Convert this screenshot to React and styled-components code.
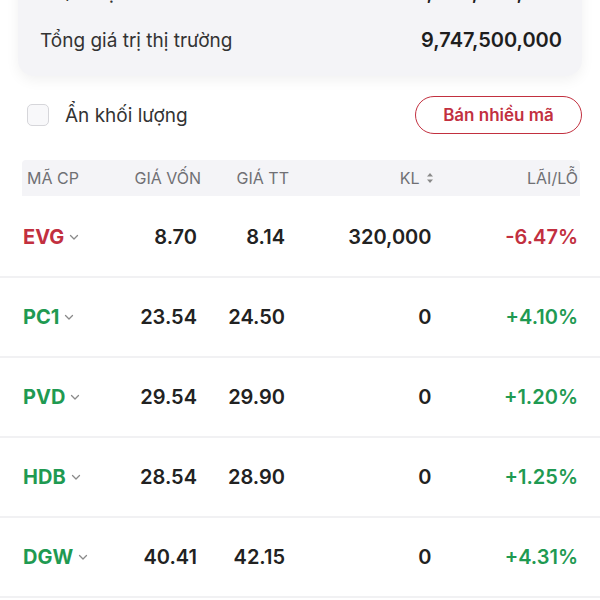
import styled, { createGlobalStyle } from "styled-components";

const GlobalStyle = createGlobalStyle`
  body {
    margin: 0;
    background: #fff;
    font-family: Inter, "Noto Sans", sans-serif;
    color: #222;
  }
`;

const RED = '#c2303f';
const GREEN = '#1f9a52';

const holdings = [
  { code: 'EVG', cost: '8.70', price: '8.14', vol: '320,000', pnl: '-6.47%', up: false },
  { code: 'PC1', cost: '23.54', price: '24.50', vol: '0', pnl: '+4.10%', up: true },
  { code: 'PVD', cost: '29.54', price: '29.90', vol: '0', pnl: '+1.20%', up: true },
  { code: 'HDB', cost: '28.54', price: '28.90', vol: '0', pnl: '+1.25%', up: true },
  { code: 'DGW', cost: '40.41', price: '42.15', vol: '0', pnl: '+4.31%', up: true },
];

function Chevron () {
  return (
    <svg width="10" height="7" viewBox="0 0 10 7">
      <path d="M1.5 1.5 L5 5 L8.5 1.5" fill="none" stroke="#8a8a8a" strokeWidth="1.3" strokeLinecap="round" strokeLinejoin="round" />
    </svg>
  );
}

function SortIcon () {
  return (
    <svg width="8" height="12" viewBox="0 0 8 12">
      <path d="M4 1 L7 4.5 H1 Z M4 11 L7 7.5 H1 Z" fill="#8a8a8a" />
    </svg>
  );
}

function InfoDot () {
  return (
    <svg width="14" height="14" viewBox="0 0 14 14">
      <circle cx="7" cy="7" r="7" fill="#9a9a9e" />
      <rect x="6.2" y="6" width="1.6" height="5" fill="#fff" />
      <circle cx="7" cy="3.9" r="1" fill="#fff" />
    </svg>
  );
}

export default function App () {
  return (
    <Page>
      <GlobalStyle />
      <SummaryCard>
        <SummaryRow>
          <Label>Lãi/lỗ dự kiến <InfoDot /></Label>
          <Amount>-1,408,000,000</Amount>
        </SummaryRow>
        <SummaryRow>
          <Label>Tổng giá trị thị trường</Label>
          <Amount>9,747,500,000</Amount>
        </SummaryRow>
      </SummaryCard>

      <Toolbar>
        <CheckLabel>
          <Box />
          Ẩn khối lượng
        </CheckLabel>
        <SellButton>Bán nhiều mã</SellButton>
      </Toolbar>

      <HeaderRow>
        <HeadCell>MÃ CP</HeadCell>
        <HeadCell $right>GIÁ VỐN</HeadCell>
        <HeadCell $right>GIÁ TT</HeadCell>
        <HeadCell $right>KL <SortIcon /></HeadCell>
        <HeadCell $right>LÃI/LỖ</HeadCell>
      </HeaderRow>

      <Table>
        {holdings.map(h => (
          <Row key={h.code}>
            <Ticker $up={h.up}>{h.code}<Chevron /></Ticker>
            <Num>{h.cost}</Num>
            <Num>{h.price}</Num>
            <Num>{h.vol}</Num>
            <Num $color={h.up ? GREEN : RED}>{h.pnl}</Num>
          </Row>
        ))}
      </Table>
    </Page>
  );
}

const Page = styled.div`
  width: 600px;
  height: 600px;
  overflow: hidden;
`;

const SummaryCard = styled.section`
  margin: -44px 18px 0;
  padding: 12px 20px 12px 22px;
  background: #f4f4f7;
  border-radius: 0 0 16px 16px;
  box-shadow: 0 4px 14px rgba(0, 0, 0, 0.06);
`;

const SummaryRow = styled.div`
  display: flex;
  align-items: center;
  justify-content: space-between;
  height: 48px;
`;

const Label = styled.span`
  display: flex;
  align-items: center;
  gap: 8px;
  font-size: 19px;
  color: #333;
`;

const Amount = styled.span`
  font-size: 20px;
  font-weight: 600;
  color: #1e1e1e;
`;

const Toolbar = styled.div`
  display: flex;
  align-items: center;
  justify-content: space-between;
  margin: 20px 18px 0 27px;
  height: 38px;
`;

const CheckLabel = styled.label`
  display: flex;
  align-items: center;
  gap: 16px;
  font-size: 19px;
  color: #333;
`;

const Box = styled.span`
  width: 20px;
  height: 20px;
  border: 1px solid #d6d6da;
  border-radius: 5px;
  background: #f8f8fa;
`;

const SellButton = styled.button`
  height: 38px;
  width: 167px;
  border: 1.5px solid ${RED};
  border-radius: 19px;
  background: #fff;
  color: ${RED};
  font-family: inherit;
  font-size: 17px;
  font-weight: 600;
`;

const HeaderRow = styled.div`
  display: grid;
  grid-template-columns: 60px 114px 88px 1fr 1fr;
  align-items: center;
  height: 36px;
  margin: 26px 20px 0 22px;
  padding: 0 2px 0 5px;
  background: #f4f4f7;
  border-radius: 4px 4px 0 0;
`;

const HeadCell = styled.div`
  display: flex;
  align-items: center;
  justify-content: ${p => (p.$right ? 'flex-end' : 'flex-start')};
  gap: 6px;
  font-size: 16px;
  color: #707074;
`;

const Table = styled.div`
  margin-top: 2px;
`;

const Row = styled.div`
  display: grid;
  grid-template-columns: 87px 87px 88px 1fr 1fr;
  align-items: center;
  height: 78px;
  padding: 0 22px 0 23px;
  border-bottom: 2px solid #f1f1f3;
`;

const Ticker = styled.div`
  display: flex;
  align-items: center;
  gap: 5px;
  font-size: 20px;
  font-weight: 700;
  color: ${p => (p.$up ? GREEN : RED)};
`;

const Num = styled.div`
  text-align: right;
  font-size: 20px;
  font-weight: 600;
  color: ${p => p.$color || '#222'};
`;
